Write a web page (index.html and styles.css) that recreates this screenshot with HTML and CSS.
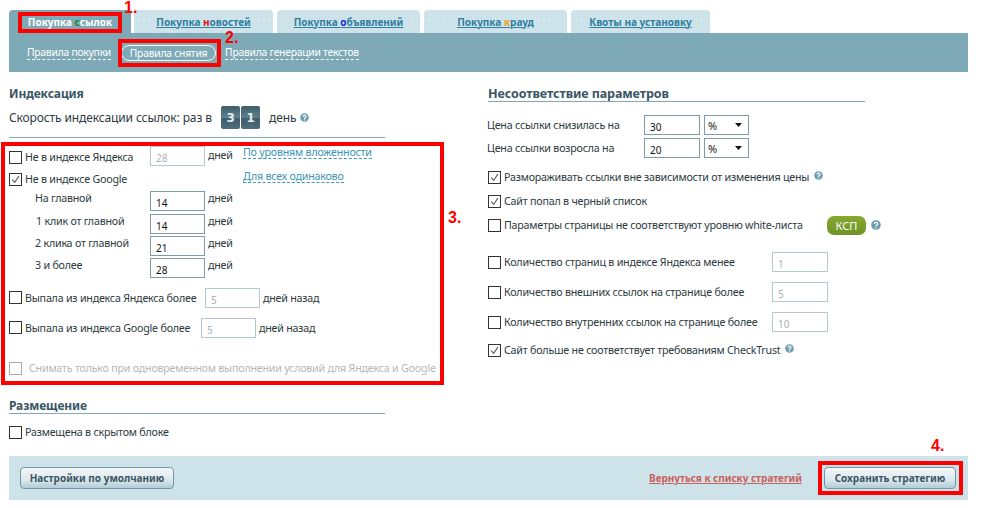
FILE: index.html
```html
<!DOCTYPE html>
<html lang="ru">
<head>
<meta charset="utf-8">
<title>Стратегия</title>
<link rel="stylesheet" href="styles.css">
</head>
<body>
<div class="page">
  <nav class="tabs">
    <a class="tab tab-active"><span>Покупка <b class="c-green">с</b>сылок</span></a>
    <a class="tab t2"><span>Покупка <b class="c-red">н</b>овостей</span></a>
    <a class="tab t3"><span>Покупка <b class="c-blue">о</b>бъявлений</span></a>
    <a class="tab t4"><span>Покупка <b class="c-orange">к</b>рауд</span></a>
    <a class="tab t5"><span>Квоты на установку</span></a>
  </nav>
  <div class="subnav">
    <a class="sublink">Правила покупки</a>
    <a class="subpill">Правила снятия</a>
    <a class="sublink">Правила генерации текстов</a>
  </div>

  <div class="columns">
    <section class="col-left">
      <h2 class="head">Индексация</h2>
      <div class="speed">
        <span class="speed-text">Скорость индексации ссылок: раз в</span>
        <span class="counter"><i>3</i><i>1</i></span>
        <span class="speed-day">день</span>
        <svg class="help" viewBox="0 0 10 10"><use href="#q"/></svg>
      </div>

      <div class="index-block">
        <div class="index-rows">
          <div class="row r-y"><span class="cb"></span><span class="lbl w-y">Не в индексе Яндекса</span><input class="num off" value="28" readonly><span class="unit">дней</span></div>
          <div class="row r-g"><span class="cb on"><svg viewBox="0 0 13 13"><path d="M2.5 6.5l3 3.5 5-7.5"/></svg></span><span class="lbl">Не в индексе Google</span></div>
          <div class="row r-s1"><span class="sub w-s">На главной</span><input class="num" value="14" readonly><span class="unit">дней</span></div>
          <div class="row r-s"><span class="sub w-s s1">1 клик от главной</span><input class="num" value="14" readonly><span class="unit">дней</span></div>
          <div class="row r-s"><span class="sub w-s s2">2 клика от главной</span><input class="num" value="21" readonly><span class="unit">дней</span></div>
          <div class="row r-s"><span class="sub w-s s2">3 и более</span><input class="num" value="28" readonly><span class="unit">дней</span></div>
        </div>
        <div class="level-links">
          <a class="dash">По уровням вложенности</a>
          <a class="dash">Для всех одинаково</a>
        </div>
      </div>

      <div class="row r-o r-o1"><span class="cb"></span><span class="lbl w-o1">Выпала из индекса Яндекса более</span><input class="num off" value="5" readonly><span class="unit">дней назад</span></div>
      <div class="row r-o r-o2"><span class="cb"></span><span class="lbl w-o2">Выпала из индекса Google более</span><input class="num off" value="5" readonly><span class="unit">дней назад</span></div>
      <div class="row r-dis"><span class="cb dis"></span><span class="lbl lbl-dis">Снимать только при одновременном выполнении условий для Яндекса и Google</span></div>

      <h2 class="head ruled h-place">Размещение</h2>
      <div class="row r-hid"><span class="cb"></span><span class="lbl">Размещена в скрытом блоке</span></div>
    </section>

    <section class="col-right">
      <h2 class="head head-wide ruled">Несоответствие параметров</h2>
      <div class="row price p1"><span class="plabel">Цена ссылки снизилась на</span><input class="num" value="30" readonly><select class="sel"><option>%</option></select></div>
      <div class="row price p2"><span class="plabel">Цена ссылки возросла на</span><input class="num" value="20" readonly><select class="sel"><option>%</option></select></div>
      <div class="row c1"><span class="cb on"><svg viewBox="0 0 13 13"><path d="M2.5 6.5l3 3.5 5-7.5"/></svg></span><span class="lbl">Размораживать ссылки вне зависимости от изменения цены</span><svg class="help h-r" viewBox="0 0 10 10"><use href="#q"/></svg></div>
      <div class="row c2"><span class="cb on"><svg viewBox="0 0 13 13"><path d="M2.5 6.5l3 3.5 5-7.5"/></svg></span><span class="lbl">Сайт попал в черный список</span></div>
      <div class="row c3"><span class="cb"></span><span class="lbl w-wl">Параметры страницы не соответствуют уровню white-листа</span><span class="ksp">КСП</span><svg class="help h-k" viewBox="0 0 10 10"><use href="#q"/></svg></div>
      <div class="row q1"><span class="cb"></span><span class="lbl w-q">Количество страниц в индексе Яндекса менее</span><input class="num off" value="1" readonly></div>
      <div class="row q2"><span class="cb"></span><span class="lbl w-q">Количество внешних ссылок на странице более</span><input class="num off" value="5" readonly></div>
      <div class="row q2"><span class="cb"></span><span class="lbl w-q">Количество внутренних ссылок на странице более</span><input class="num off" value="10" readonly></div>
      <div class="row c4"><span class="cb on"><svg viewBox="0 0 13 13"><path d="M2.5 6.5l3 3.5 5-7.5"/></svg></span><span class="lbl">Сайт больше не соответствует требованиям CheckTrust</span><svg class="help h-r" viewBox="0 0 10 10"><use href="#q"/></svg></div>
    </section>
  </div>

  <footer class="footer">
    <button class="btn btn-default">Настройки по умолчанию</button>
    <a class="back">Вернуться к списку стратегий</a>
    <button class="btn btn-save">Сохранить стратегию</button>
  </footer>
</div>

<div class="mark m1"></div><span class="num-mark n1">1.</span>
<div class="mark m2"></div><span class="num-mark n2">2.</span>
<div class="mark m3"></div><span class="num-mark n3">3.</span>
<div class="mark m4"></div><span class="num-mark n4">4.</span>

<svg class="defs" width="0" height="0">
  <symbol id="q" viewBox="0 0 10 10">
    <circle cx="5" cy="5" r="4.8" fill="#6f9fb1"/>
    <path d="M3.4 3.9c0-2 3.3-2 3.3-.1 0 1.200-1.700 1.200-1.700 2.500" fill="none" stroke="#fff" stroke-width="1.200"/>
    <rect x="4.400" y="7" width="1.200" height="1.300" fill="#fff"/>
  </symbol>
</svg>
</body>
</html>
```

FILE: styles.css
```css
* { box-sizing: border-box; }
html, body { margin: 0; padding: 0; background: #fff; }
body {
  font-family: "Noto Sans", "DejaVu Sans", sans-serif;
  font-size: 10.7px;
  letter-spacing: -0.22px;
  color: #2d3a40;
  width: 981px;
  height: 508px;
  overflow: hidden;
  position: relative;
}
.page { padding: 10px 13px 0 9px; }

/* tabs */
.tabs { display: flex; height: 23px; }
.tab {
  display: flex; align-items: center; justify-content: center;
  height: 23px;
  border-radius: 4px 4px 0 0;
  font-weight: bold;
  font-size: 10px;
  letter-spacing: 0;
  color: #2f7f9f;
  background-color: #cfe3ea;
  background-image: radial-gradient(circle, #bcd6e0 0.6px, transparent 0.8px);
  background-size: 5px 5px;
}
.tab span { text-decoration: underline; }
.tab-active span { text-decoration: none; }
.tab b { font-weight: bold; }
.tab-active { width: 122px; background: #7eaab7; color: #fff; }
.t2 { width: 139px; margin-left: 3px; }
.t3 { width: 143px; margin-left: 4px; }
.t4 { width: 143px; margin-left: 4px; }
.t5 { width: 139px; margin-left: 4px; }
.c-green { color: #1f8a2a; }
.c-red { color: #e01020; }
.c-blue { color: #1020e0; }
.c-orange { color: #f0a020; }

.subnav {
  display: flex; align-items: center;
  height: 39px;
  background: #7eaab7;
  padding: 0 0 0 18px;
  color: #fff;
  font-size: 10.3px;
}
.sublink { border-bottom: 1px dashed #fff; line-height: 13px; white-space: nowrap; }
.subpill {
  display: flex; align-items: center; justify-content: center;
  flex: none;
  width: 95px; height: 16px;
  margin: 0 9px 0 10px;
  border: 1px solid #fff;
  border-radius: 8px;
  line-height: 14px;
  white-space: nowrap;
}

/* columns */
.columns { display: flex; height: 384px; }
.col-left { width: 376px; padding-top: 13px; }
.col-right { width: 377px; margin-left: 103px; padding-top: 13px; }

.head {
  margin: 0; height: 17px;
  padding-top: 1px;
  font-size: 12px;
  letter-spacing: -0.1px;
  font-weight: bold;
  line-height: 15px;
  color: #3a5564;
}
.head-wide { font-size: 12.5px; }
.ruled { border-bottom: 1px solid #7ea9b6; }

.speed {
  display: flex; align-items: center;
  height: 32px;
  margin-top: 4px;
  padding-bottom: 8px;
  border-bottom: 1px solid #7ea9b6;
  font-size: 12px;
  letter-spacing: -0.12px;
}
.speed-text { width: 212px; white-space: nowrap; }
.counter { display: flex; gap: 1px; }
.counter i {
  width: 19px; height: 23px;
  display: flex; align-items: center; justify-content: center;
  background: linear-gradient(#3f5d6b, #5d7f8d 50%, #3f5d6b 52%, #4d6d7b);
  border-radius: 2px;
  color: #e4eef2;
  font: bold 12px "DejaVu Sans", sans-serif;
}
.speed-day { margin-left: 9px; }
.help { width: 9px; height: 9px; margin-left: 4px; flex: none; }

.row { display: flex; align-items: center; }
.cb {
  flex: none;
  width: 13px; height: 13px;
  border: 1px solid #333;
  background: #fff;
  margin-right: 3px;
  display: block;
}
.cb svg { display: block; width: 11px; height: 11px; }
.cb path { fill: none; stroke: #555; stroke-width: 1.300; }
.cb.dis { border-color: #aaa; }
.lbl { white-space: nowrap; flex: none; }
.lbl-dis { color: #b4b8ba; margin-left: 4px; }

.num {
  flex: none;
  width: 55px; height: 20px;
  border: 1px solid #7f9ca6;
  padding: 4px 0 0 5px;
  font: 10px "Noto Sans", sans-serif;
  color: #111;
  background: #fff;
  outline: none;
  border-radius: 0;
}
.num.off { border-color: #b5c8d0; color: #a9b1b5; }
.unit { margin-left: 3px; margin-top: -2px; white-space: nowrap; }

/* left rows */
.index-block { display: flex; margin-top: 8px; }
.index-rows { width: 234px; }
.w-y { width: 125px; margin-top: 2px; }
.r-y { height: 19px; }
.r-y .cb { margin-top: 4px; }
.r-g { height: 18px; margin-top: 5px; }
.r-s1 { height: 20px; margin-top: 3px; }
.r-s { height: 20px; margin-top: 2px; }
.r-s1 + .r-s { margin-top: 3px; }
.r-s1 .unit, .r-s .unit { margin-top: -7px; }
.sub { padding-left: 26px; margin-top: -7px; white-space: nowrap; }
.w-s { width: 141px; flex: none; }
.s1 { padding-left: 27px; }
.level-links {
  display: flex; flex-direction: column; align-items: flex-start;
  gap: 11px;
}
.dash {
  color: #3d96b4;
  border-bottom: 1px dashed #3d96b4;
  line-height: 12px;
  white-space: nowrap;
}
.r-o { height: 20px; margin-top: 10px; }
.r-o .cb { margin-top: -2px; }
.r-o .unit { margin-top: 0; }
.w-o1 { width: 180px; }
.w-o2 { width: 176px; }
.r-dis { height: 18px; margin-top: 21px; }
.h-place { margin-top: 20px; }
.r-hid { height: 14px; margin-top: 11px; }

/* right rows */
.price { height: 20px; }
.p1 { margin-top: 13px; }
.p2 { margin-top: 3px; }
.plabel { width: 157px; margin-top: -1px; white-space: nowrap; margin-left: -1px; }
.price .num { width: 56px; }
.sel {
  appearance: none;
  width: 45px; height: 20px;
  margin-left: 4px;
  border: 1px solid #7f9ca6;
  border-radius: 0;
  padding: 0 0 0 3px;
  font: 11px "Noto Sans", sans-serif;
  color: #222;
  background: #fff url("data:image/svg+xml,%3Csvg xmlns='http://www.w3.org/2000/svg' width='7' height='4'%3E%3Cpath d='M0 0h7L3.500 4z' fill='%23111'/%3E%3C/svg%3E") no-repeat 30px 7px;
}
.c1 { height: 16px; margin-top: 11px; }
.c2 { height: 16px; margin-top: 8px; }
.c3 { height: 20px; margin-top: 6px; }
.w-wl { width: 323px; }
.ksp {
  flex: none;
  width: 39px; height: 19px;
  background: linear-gradient(#86a92f, #6f9226);
  color: #fff;
  border-radius: 7px;
  display: flex; align-items: center; justify-content: center;
  font-size: 11px;
  letter-spacing: 0;
}
.h-r { margin-left: 5px; margin-top: -4px; }
.h-k { margin-left: 5px; width: 10px; height: 10px; }
.q1, .q2 { height: 20px; }
.q1 { margin-top: 17px; }
.q2 { margin-top: 10px; }
.w-q { width: 268px; }
.q1 .num, .q2 .num { width: 56px; }
.c4 { height: 16px; margin-top: 10px; }

/* footer */
.footer {
  display: flex; align-items: center;
  height: 44px;
  background: #cde2e9;
  padding: 0 12px 0 11px;
}
.btn {
  height: 22px;
  border: 1px solid #6f97a6;
  border-radius: 4px;
  background: linear-gradient(#f4f8f9, #dbe7ec 60%, #b4ccd6);
  color: #3a5564;
  font: bold 10px "Noto Sans", sans-serif;
  padding: 0;
}
.btn-default { width: 154px; }
.btn-save { width: 132px; margin-left: 22px; }
.back {
  margin-left: auto;
  color: #c9605c;
  font-weight: bold;
  font-size: 10px;
  letter-spacing: -0.05px;
  text-decoration: underline;
}

/* annotations */
.mark { position: absolute; border: 4px solid #f00; }
.m1 { left: 18px; top: 12px; width: 104px; height: 21px; }
.m2 { left: 118px; top: 39px; width: 103px; height: 28px; }
.m3 { left: 1px; top: 142px; width: 443px; height: 243px; }
.m4 { left: 818px; top: 461px; width: 145px; height: 34px; }
.num-mark {
  position: absolute;
  color: #f00;
  font: bold 16px/16px "Liberation Sans", Arial, sans-serif;
  letter-spacing: 0;
}
.n1 { left: 124px; top: 0; }
.n2 { left: 225px; top: 30px; }
.n3 { left: 448px; top: 210px; }
.n4 { left: 931px; top: 438px; }
.defs { position: absolute; }
```
